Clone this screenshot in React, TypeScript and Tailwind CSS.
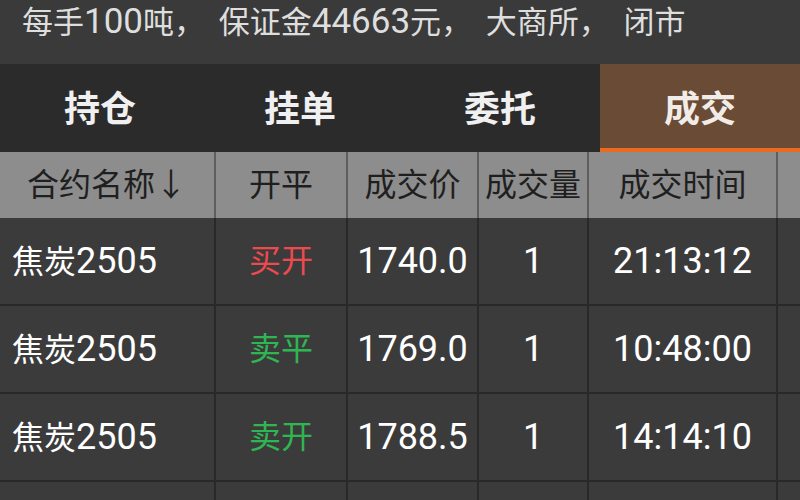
const font = "font-['Roboto','Noto_Sans_CJK_SC',sans-serif]";

const tabs = ['持仓', '挂单', '委托', '成交'];
const active = 3;

const headers = ['合约名称↓', '开平', '成交价', '成交量', '成交时间', ''];

interface Trade {
  name: string;
  code: string;
  side: string;
  price: string;
  qty: string;
  time: string;
}

const trades: Trade[] = [
  { name: '焦炭', code: '2505', side: '买开', price: '1740.0', qty: '1', time: '21:13:12' },
  { name: '焦炭', code: '2505', side: '卖平', price: '1769.0', qty: '1', time: '10:48:00' },
  { name: '焦炭', code: '2505', side: '卖开', price: '1788.5', qty: '1', time: '14:14:10' },
];

// fixed column widths so the dividers land where the app draws them
const cols = 'grid grid-cols-[216px_132px_131px_110px_189px_1fr]';
const cell = 'flex items-center justify-center border-r-2 border-[#292929]';

export default function App() {
  return (
    <div className={`${font} h-[500px] w-[800px] overflow-hidden bg-[#393939]`}>
      {/* the app's digits are drawn larger than its CJK glyphs */}
      <div className="h-16 whitespace-pre bg-[#3a3a3a] pl-[22px] pt-[1px] text-[31px] leading-[42px] text-[#dedede] [word-spacing:6px]">
        每手<span className="text-[35px]">100</span>吨， 保证金<span className="text-[35px]">44663</span>元， 大商所， 闭市
      </div>

      <div className="grid h-[88px] grid-cols-4 bg-[#2b2b2b]">
        {tabs.map((t, i) => (
          <div
            key={t}
            className={
              i === active
                ? 'flex items-center justify-center border-b-4 border-[#ea6b1d] bg-[#6a4b36] pt-2 text-[36px] font-bold text-[#f2ece8]'
                : 'flex items-center justify-center pt-1 text-[36px] font-bold text-[#f0f0f0]'
            }
          >
            {t}
          </div>
        ))}
      </div>

      <div className={`${cols} h-[66px] bg-[#8d8d8d] text-[32px] text-[#1f1f1f]`}>
        {headers.map((h, i) => (
          <div key={i} className="flex items-center justify-center border-r-2 border-[#5e5e5e] last:border-r-0">
            {h}
          </div>
        ))}
      </div>

      {trades.map((r, i) => {
        const sideColor = r.side.startsWith('买') ? 'text-[#ec4a4f]' : 'text-[#2fb551]';
        return (
          <div key={i} className={`${cols} h-[88px] border-b-2 border-[#292929] bg-[#3b3b3b] text-[32px] text-white`}>
            <div className="flex items-center border-r-2 border-[#292929] pl-3">
              <span>
                {r.name}
                <span className="text-[36px]">{r.code}</span>
              </span>
            </div>
            <div className={`${cell} ${sideColor}`}>{r.side}</div>
            <div className={`${cell} text-[36px]`}>{r.price}</div>
            <div className={`${cell} text-[36px]`}>{r.qty}</div>
            <div className={`${cell} text-[36px]`}>{r.time}</div>
            <div />
          </div>
        );
      })}

      {/* next row, scrolled mostly out of view */}
      <div className={`${cols} h-[88px] bg-[#3b3b3b]`}>
        <div className="border-r-2 border-[#292929]" />
        <div className="border-r-2 border-[#292929]" />
        <div className="border-r-2 border-[#292929]" />
        <div className="border-r-2 border-[#292929]" />
        <div className="border-r-2 border-[#292929]" />
        <div />
      </div>
    </div>
  );
}
